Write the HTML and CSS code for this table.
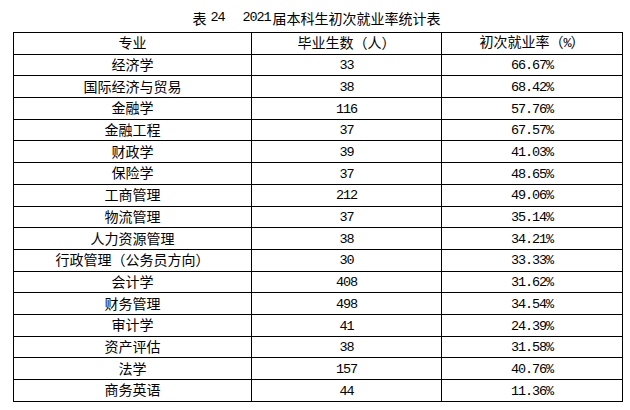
FILE: index.html
```html
<!DOCTYPE html>
<html lang="zh">
<head>
<meta charset="utf-8">
<link rel="stylesheet" href="styles.css">
</head>
<body>
<div class="page">
  <div class="title"><span>表</span><span class="num tnum">24</span><span class="gap"></span><span class="num">2021</span><span>届本科生初次就业率统计表</span></div>
  <table class="stats">
    <thead>
      <tr><th>专业</th><th>毕业生数（人）</th><th>初次就业率（<span class="num">%</span>）</th></tr>
    </thead>
    <tbody>
      <tr><td>经济学</td><td class="num">33</td><td class="num">66.67%</td></tr>
      <tr><td>国际经济与贸易</td><td class="num">38</td><td class="num">68.42%</td></tr>
      <tr><td>金融学</td><td class="num">116</td><td class="num">57.76%</td></tr>
      <tr><td>金融工程</td><td class="num">37</td><td class="num">67.57%</td></tr>
      <tr><td>财政学</td><td class="num">39</td><td class="num">41.03%</td></tr>
      <tr><td>保险学</td><td class="num">37</td><td class="num">48.65%</td></tr>
      <tr><td>工商管理</td><td class="num">212</td><td class="num">49.06%</td></tr>
      <tr><td>物流管理</td><td class="num">37</td><td class="num">35.14%</td></tr>
      <tr><td>人力资源管理</td><td class="num">38</td><td class="num">34.21%</td></tr>
      <tr><td>行政管理（公务员方向）</td><td class="num">30</td><td class="num">33.33%</td></tr>
      <tr><td>会计学</td><td class="num">408</td><td class="num">31.62%</td></tr>
      <tr><td>财务管理</td><td class="num">498</td><td class="num">34.54%</td></tr>
      <tr><td>审计学</td><td class="num">41</td><td class="num">24.39%</td></tr>
      <tr><td>资产评估</td><td class="num">38</td><td class="num">31.58%</td></tr>
      <tr><td>法学</td><td class="num">157</td><td class="num">40.76%</td></tr>
      <tr><td>商务英语</td><td class="num">44</td><td class="num">11.36%</td></tr>
    </tbody>
  </table>
</div>
</body>
</html>
```
FILE: styles.css
```css
html, body {
  margin: 0;
  padding: 0;
  background: #fff;
}
body {
  font-family: "Noto Sans CJK SC", "Noto Sans", sans-serif;
  font-size: 14px;
  color: #000;
}
.page {
  width: 630px;
  height: 410px;
  padding: 0 0 0 13px;
  box-sizing: border-box;
}
.title {
  height: 32px;
  width: 607px;
  display: flex;
  justify-content: center;
  align-items: center;
  padding-top: 3px;
  box-sizing: border-box;
  font-size: 14px;
  line-height: 1;
}
.title .tnum {
  margin-left: 4px;
}
.title .gap {
  width: 16px;
}
.title .num {
  margin-right: 2px;
}
.num {
  font-family: "Liberation Mono", "DejaVu Sans Mono", monospace;
  font-size: 13.5px;
  letter-spacing: -1.1px;
}
.stats {
  border-collapse: collapse;
  table-layout: fixed;
  width: 607px;
}
.stats th,
.stats td {
  border: 1px solid #000;
  padding: 0 0 2px 0;
  text-align: center;
  font-weight: normal;
  line-height: 1;
  height: 18.7px;
  white-space: nowrap;
}
.stats td.num {
  padding: 2px 0 0 0;
}
.stats th:nth-child(1), .stats td:nth-child(1) { width: 237px; }
.stats th:nth-child(2), .stats td:nth-child(2) { width: 189px; }
.stats th:nth-child(3), .stats td:nth-child(3) { width: 180px; }
```
